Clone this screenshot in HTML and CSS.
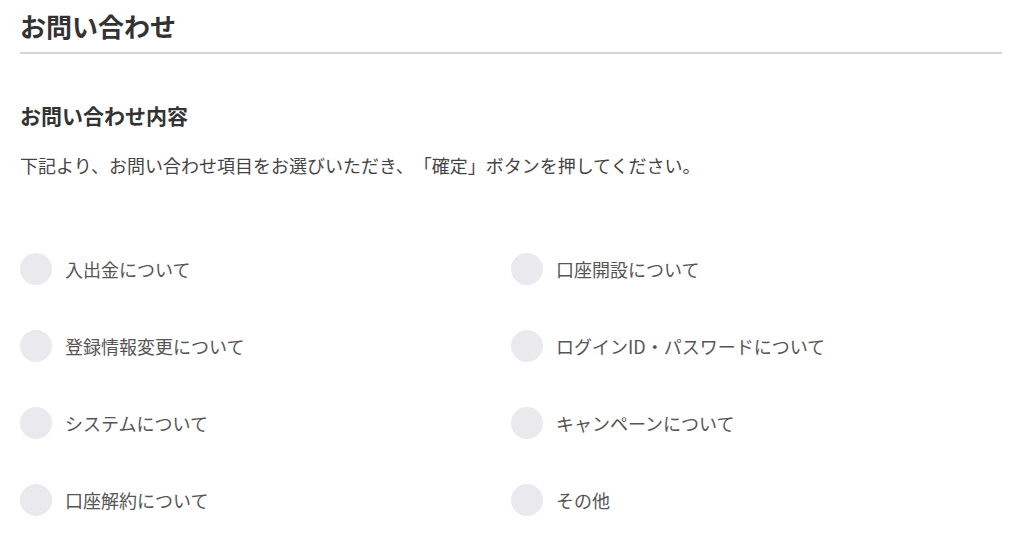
FILE: index.html
```html
<!DOCTYPE html>
<html lang="ja">
<head>
<meta charset="utf-8">
<title>お問い合わせ</title>
<link rel="stylesheet" href="styles.css">
</head>
<body>
<div class="page">
  <h1 class="title">お問い合わせ</h1>
  <h2 class="subtitle">お問い合わせ内容</h2>
  <p class="lead">下記より、お問い合わせ項目をお選びいただき、「確定」ボタンを押してください。</p>
  <div class="options">
    <label class="option"><span class="radio"></span><span class="label">入出金について</span></label>
    <label class="option"><span class="radio"></span><span class="label">口座開設について</span></label>
    <label class="option"><span class="radio"></span><span class="label">登録情報変更について</span></label>
    <label class="option"><span class="radio"></span><span class="label">ログインID・パスワードについて</span></label>
    <label class="option"><span class="radio"></span><span class="label">システムについて</span></label>
    <label class="option"><span class="radio"></span><span class="label">キャンペーンについて</span></label>
    <label class="option"><span class="radio"></span><span class="label">口座解約について</span></label>
    <label class="option"><span class="radio"></span><span class="label">その他</span></label>
  </div>
</div>
</body>
</html>
```
FILE: styles.css
```css
html, body {
  margin: 0;
  padding: 0;
  background: #ffffff;
}
body {
  font-family: "Noto Sans CJK JP", "Noto Sans", sans-serif;
  color: #333333;
  text-spacing-trim: space-all;
}
.page {
  padding: 0 22px 0 20px;
}
.title {
  margin: 0;
  padding: 6px 0 6px;
  font-size: 26px;
  line-height: 40px;
  font-weight: 700;
  color: #333333;
  border-bottom: 2px solid #d6d6d6;
}
.subtitle {
  margin: 46px 0 0;
  font-size: 21px;
  line-height: 30px;
  font-weight: 700;
  color: #333333;
}
.lead {
  margin: 21px 0 0;
  font-size: 18px;
  line-height: 28px;
  color: #444444;
}
.options {
  margin-top: 74px;
  display: grid;
  grid-template-columns: 1fr 1fr;
  row-gap: 45px;
}
.option {
  display: flex;
  align-items: center;
  gap: 13px;
  height: 32px;
}
.radio {
  flex: none;
  width: 32px;
  height: 32px;
  border-radius: 50%;
  background: #e9e9ee;
}
.label {
  font-size: 18px;
  line-height: 28px;
  color: #555555;
}
```
